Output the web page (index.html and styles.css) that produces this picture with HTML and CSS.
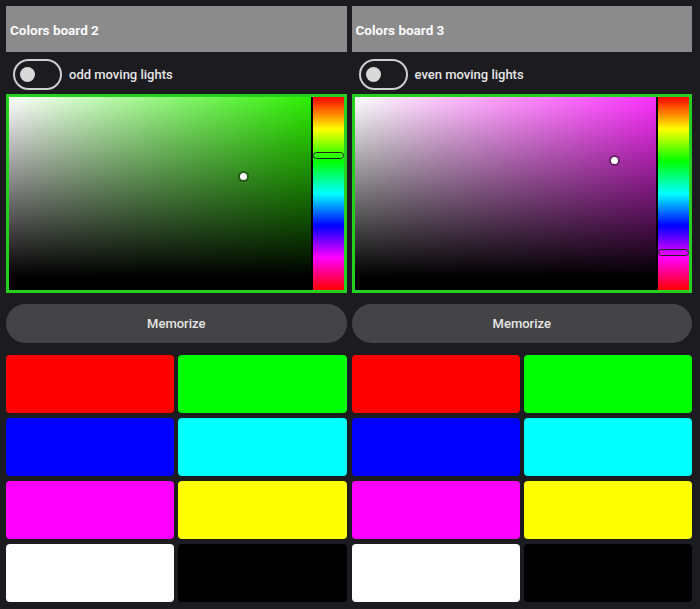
FILE: index.html
```html
<!DOCTYPE html>
<html>
<head>
<meta charset="utf-8">
<link rel="stylesheet" href="styles.css">
</head>
<body>
<div class="boards">
  <section class="board">
    <div class="board-title">Colors board 2</div>
    <label class="switch-row">
      <span class="switch"><span class="knob"></span></span>
      <span class="switch-label">odd moving lights</span>
    </label>
    <div class="picker">
      <div class="sv sv-green">
        <span class="cursor" style="left:77.5%;top:44%"></span>
      </div>
      <div class="hue">
        <span class="hue-handle" style="top:30%"></span>
      </div>
    </div>
    <button class="memorize">Memorize</button>
    <div class="swatches">
      <div class="swatch red"></div>
      <div class="swatch green"></div>
      <div class="swatch blue"></div>
      <div class="swatch cyan"></div>
      <div class="swatch magenta"></div>
      <div class="swatch yellow"></div>
      <div class="swatch white"></div>
      <div class="swatch black"></div>
    </div>
  </section>
  <section class="board">
    <div class="board-title">Colors board 3</div>
    <label class="switch-row">
      <span class="switch"><span class="knob"></span></span>
      <span class="switch-label">even moving lights</span>
    </label>
    <div class="picker">
      <div class="sv sv-magenta">
        <span class="cursor" style="left:86%;top:35%"></span>
      </div>
      <div class="hue">
        <span class="hue-handle" style="top:80.5%"></span>
      </div>
    </div>
    <button class="memorize">Memorize</button>
    <div class="swatches">
      <div class="swatch red"></div>
      <div class="swatch green"></div>
      <div class="swatch blue"></div>
      <div class="swatch cyan"></div>
      <div class="swatch magenta"></div>
      <div class="swatch yellow"></div>
      <div class="swatch white"></div>
      <div class="swatch black"></div>
    </div>
  </section>
</div>
</body>
</html>
```

FILE: styles.css
```css
* { box-sizing: border-box; }

html, body {
  margin: 0;
  height: 100%;
  background: #1c1b20;
}

body {
  padding: 6px 8px 0 6px;
  font-family: Roboto, "Noto Sans", "Liberation Sans", sans-serif;
  color: #e2e2e2;
}

.boards {
  display: grid;
  grid-template-columns: 1fr 1fr;
  column-gap: 5px;
}

.board {
  display: flex;
  flex-direction: column;
}

.board-title {
  height: 46px;
  background: #8b8b8b;
  color: #fafafa;
  font-weight: 700;
  font-size: 13.5px;
  line-height: 48px;
  padding-left: 4px;
}

.switch-row {
  display: flex;
  align-items: center;
  gap: 7px;
  height: 32px;
  margin-top: 6px;
  padding-left: 7px;
}

.switch {
  width: 49px;
  height: 31px;
  border: 2px solid #cfcfcf;
  border-radius: 16px;
  display: flex;
  align-items: center;
  padding-left: 5px;
}

.knob {
  width: 15px;
  height: 15px;
  border-radius: 50%;
  background: #d9d9d9;
}

.switch-label {
  font-size: 13px;
  font-weight: 500;
  color: #e6e6e6;
}

.picker {
  margin-top: 4px;
  height: 199px;
  border: 3px solid #25d020;
  background: #000;
  display: flex;
  gap: 2px;
}

.sv {
  position: relative;
  flex: 1;
  margin-bottom: 13px;
}

.sv-green {
  background:
    linear-gradient(to bottom, rgba(0,0,0,0), #000),
    linear-gradient(to right, #fff, #2cf000);
}

.sv-magenta {
  background:
    linear-gradient(to bottom, rgba(0,0,0,0), #000),
    linear-gradient(to right, #fff, #ff30ff);
}

.cursor {
  position: absolute;
  width: 7px;
  height: 7px;
  margin: -3px 0 0 -3px;
  border-radius: 50%;
  background: #fff;
  box-shadow: 0 0 0 2px rgba(0,0,0,0.35);
}

.hue {
  position: relative;
  width: 31px;
  background: linear-gradient(to bottom,
    #ff0000 0%, #ffff00 16.7%, #00ff00 33.3%, #00ffff 50%,
    #0000ff 66.7%, #ff00ff 83.3%, #ff0000 100%);
}

.hue-handle {
  position: absolute;
  left: 0;
  right: 0;
  height: 7px;
  margin-top: -3px;
  border: 1.5px solid #222;
  border-radius: 4px;
}

.memorize {
  margin-top: 11px;
  height: 39px;
  border: none;
  border-radius: 20px;
  background: #444446;
  color: #e4e4e4;
  font-family: inherit;
  font-size: 13px;
  font-weight: 500;
}

.swatches {
  margin-top: 12px;
  display: grid;
  grid-template-columns: 1fr 1fr;
  grid-template-rows: repeat(4, 58px);
  gap: 5px 4px;
}

.swatch { border-radius: 4px; }
.red { background: #ff0000; }
.green { background: #00ff00; }
.blue { background: #0000ff; }
.cyan { background: #00ffff; }
.magenta { background: #ff00ff; }
.yellow { background: #ffff00; }
.white { background: #ffffff; }
.black { background: #000000; }
```
